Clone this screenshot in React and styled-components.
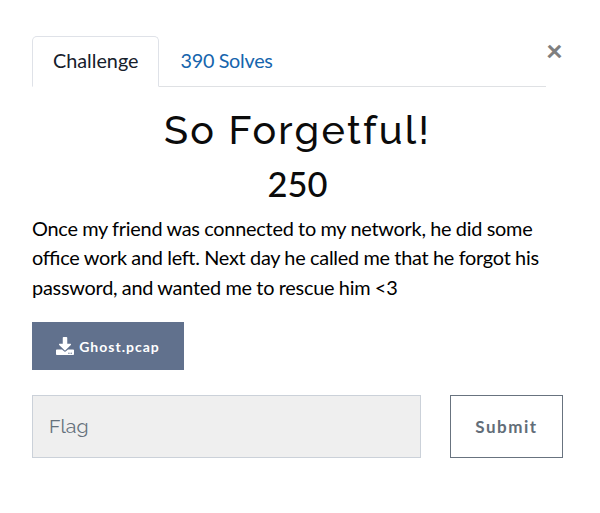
import React from 'react';
import styled, { createGlobalStyle } from 'styled-components';
import { FaDownload } from 'react-icons/fa';

const GlobalStyle = createGlobalStyle`
  * { box-sizing: border-box; }
  body { margin: 0; background: #fff; font-family: Lato, sans-serif; color: #0b0b0b; }
`;

const Dialog = styled.main`
  width: 600px;
  height: 513px;
  padding: 36px 37px 0 32px;
`;

const Header = styled.header`
  display: flex;
  height: 51px;
`;

const Tabs = styled.nav`
  display: flex;
  width: 514px;
  border-bottom: 1px solid #dfe1e4;
`;

const Tab = styled.a`
  height: 51px;
  padding: 0 20px;
  border: 1px solid ${p => (p.$active ? '#dfe2e8' : 'transparent')};
  border-bottom-color: ${p => (p.$active ? '#fff' : 'transparent')};
  border-radius: 5px 5px 0 0;
  font-size: 19.8px;
  line-height: 47px;
  letter-spacing: ${p => (p.$active ? '0' : '-0.25px')};
  word-spacing: -0.3px;
  white-space: nowrap;
  color: ${p => (p.$active ? '#16202b' : '#1665ad')};
`;

const Close = styled.button`
  width: 17px;
  height: 28px;
  padding: 0;
  border: 0;
  background: none;
  font: 900 29px/28px Lato, sans-serif;
  color: #7f7f7f;
`;

const Title = styled.h2`
  margin: 19px 0 0;
  font: 500 39.5px/48px Raleway, Lato, sans-serif;
  letter-spacing: 2.25px;
  text-align: center;
`;

const Points = styled.h3`
  margin: 8px 0 0;
  font-weight: 500;
  font-size: 34.5px;
  line-height: 44px;
  text-align: center;
`;

const Description = styled.p`
  margin: 8px 0 0;
  font-size: 19.9px;
  line-height: 29.3px;
  letter-spacing: -0.25px;
  word-spacing: -0.3px;
  font-feature-settings: 'liga' 1;
  white-space: nowrap;
  color: #000;
`;

const Download = styled.a`
  display: flex;
  align-items: center;
  justify-content: center;
  gap: 5px;
  width: 152px;
  height: 48px;
  margin-top: 20px;
  background: #61718d;
  color: #fff;
  font-size: 14px;
  font-weight: 700;
  letter-spacing: 1px;
`;

const FileName = styled.span`
  padding-top: 2px;
`;

const Form = styled.form`
  display: flex;
  gap: 29px;
  margin-top: 25px;
`;

const FlagInput = styled.input`
  width: 389px;
  height: 63px;
  padding: 0 16px;
  border: 1px solid #cbd1d9;
  border-radius: 0;
  background: #efefef;
  font: 400 19.5px Raleway, Lato, sans-serif;
  &::placeholder { color: #65717b; opacity: 1; }
`;

const Submit = styled.button`
  width: 113px;
  height: 63px;
  padding: 0;
  border: 1px solid #68737f;
  background: #fff;
  color: #626d78;
  font: 700 17px Lato, sans-serif;
  letter-spacing: 1.5px;
`;

export default function App() {
  return (
    <>
      <GlobalStyle />
      <Dialog>
        <Header>
          <Tabs>
            <Tab $active>Challenge</Tab>
            <Tab>390 Solves</Tab>
          </Tabs>
          <Close type="button" aria-label="Close">×</Close>
        </Header>
        <Title>So Forgetful!</Title>
        <Points>250</Points>
        <Description>
          Once my friend was connected to my network, he did some<br />
          office work and left. Next day he called me that he forgot his<br />
          password, and wanted me to rescue him &lt;3
        </Description>
        <Download><FaDownload size={18} /><FileName>Ghost.pcap</FileName></Download>
        <Form>
          <FlagInput placeholder="Flag" />
          <Submit type="button">Submit</Submit>
        </Form>
      </Dialog>
    </>
  );
}
